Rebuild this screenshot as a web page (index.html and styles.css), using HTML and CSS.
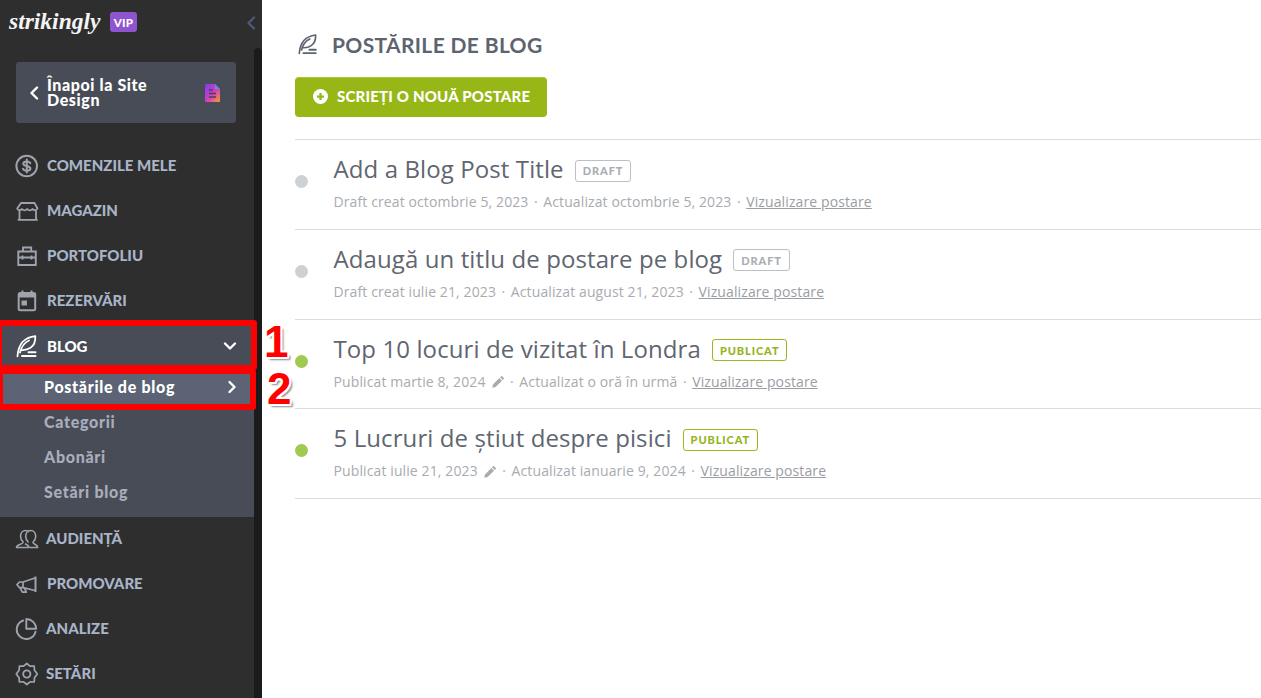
FILE: index.html
```html
<!DOCTYPE html>
<html lang="ro">
<head>
<meta charset="utf-8">
<title>Postările de blog</title>
<link rel="stylesheet" href="styles.css">
</head>
<body>
<svg class="defs" width="0" height="0" aria-hidden="true">
  <defs>
    <symbol id="i-quill" viewBox="0 0 24 24">
      <path d="M2.500 22.300C3 15 5 4 20.300 2.200 20.600 8 19 11.500 15.500 13.800 13 15.500 9.500 16.300 6.200 16M5 18.500C6.500 12.500 9.500 8.500 14 6.500" fill="none" stroke="currentColor" stroke-width="1.800" stroke-linecap="round" stroke-linejoin="round"/>
      <path d="M7 22H20.500M13.500 18.300H20.500" fill="none" stroke="currentColor" stroke-width="2" stroke-linecap="round"/>
    </symbol>
    <linearGradient id="docgrad" x1="0" y1="0" x2="1" y2="1">
      <stop offset="0" stop-color="#7a3cf0"/>
      <stop offset=".55" stop-color="#d53fc0"/>
      <stop offset="1" stop-color="#f5a21e"/>
    </linearGradient>
  </defs>
</svg>

<div class="app">
  <aside class="sidebar">
    <div class="brand">
      <span class="logo">strikingly</span>
      <span class="vip">VIP</span>
      <svg class="collapse" viewBox="0 0 10 14"><path d="M8 1.500 2.500 7 8 12.500" fill="none" stroke="currentColor" stroke-width="2.400" stroke-linecap="round" stroke-linejoin="round"/></svg>
    </div>
    <div class="side-body">
      <div class="side-inner">
        <a class="back">
          <svg class="back-arrow" viewBox="0 0 10 14"><path d="M8 1.500 2.500 7 8 12.500" fill="none" stroke="currentColor" stroke-width="2.400" stroke-linecap="round" stroke-linejoin="round"/></svg>
          <span class="back-text">Înapoi la Site Design</span>
          <svg class="back-doc" viewBox="0 0 15 18">
            <path d="M0 1a1 1 0 0 1 1-1h8.500L15 5.500V17a1 1 0 0 1-1 1H1a1 1 0 0 1-1-1z" fill="url(#docgrad)"/>
            <path d="M10 0l5 5h-5z" fill="#5f8fe0"/>
            <path d="M4 6h4M4 9.500h7M4 13h7" stroke="#4a4050" stroke-width="1.500"/>
          </svg>
        </a>
        <nav class="nav">
          <a class="nav-item">
            <svg class="nav-icon" viewBox="0 0 24 24"><circle cx="11.700" cy="12" r="10.300" fill="none" stroke="currentColor" stroke-width="2"/><path d="M15.300 9.300C15 8 13.600 7.500 11.800 7.500c-2 0-3.500.8-3.500 2.200 0 3 7.100 1.600 7.100 4.800 0 1.400-1.500 2.200-3.600 2.200-1.900 0-3.300-.6-3.700-1.900M11.800 5.500v13" fill="none" stroke="currentColor" stroke-width="2" stroke-linecap="round"/></svg>
            <span>COMENZILE MELE</span>
          </a>
          <a class="nav-item">
            <svg class="nav-icon" viewBox="0 0 24 24"><path d="M6 4h13.500l3 5.500c-1 2.200-4 2.200-5 .5-1.500 1.700-3.800 1.700-5.300 0-1.500 1.700-3.700 1.700-5.200 0-1 1.700-4 1.700-4.800-.5z" fill="none" stroke="currentColor" stroke-width="1.800" stroke-linejoin="round"/><path d="M4.500 11.500V20.800h16.500V11.500M2.700 20.800h20" fill="none" stroke="currentColor" stroke-width="1.800"/></svg>
            <span>MAGAZIN</span>
          </a>
          <a class="nav-item">
            <svg class="nav-icon" viewBox="0 0 24 24"><path d="M3.300 7.500h17.500v13.500H3.300zM8 7.500V3.500h8.200v4M3.300 13.500h17.500M7.500 11.500v4M16.500 11.500v4" fill="none" stroke="currentColor" stroke-width="1.900"/></svg>
            <span>PORTOFOLIU</span>
          </a>
          <a class="nav-item">
            <svg class="nav-icon" viewBox="0 0 24 24"><rect x="3.700" y="4" width="16.500" height="17.300" rx="1.500" fill="none" stroke="currentColor" stroke-width="2"/><path d="M3.700 6.500h16.500" stroke="currentColor" stroke-width="4"/><path d="M7.500 1.500v3.500M16.500 1.500v3.500" stroke="currentColor" stroke-width="2"/><rect x="6.500" y="11.500" width="5.500" height="5" fill="currentColor"/></svg>
            <span>REZERVĂRI</span>
          </a>
          <div class="nav-group">
            <a class="nav-item nav-item-open">
              <svg class="nav-icon"><use href="#i-quill"/></svg>
              <span>BLOG</span>
              <svg class="chev-down" viewBox="0 0 14 10"><path d="M2 2.500 7 7.500 12 2.500" fill="none" stroke="currentColor" stroke-width="2.400" stroke-linecap="round" stroke-linejoin="round"/></svg>
            </a>
            <a class="sub-item sub-item-active">
              <span>Postările de blog</span>
              <svg class="chev-right" viewBox="0 0 10 14"><path d="M2.500 2 7.500 7 2.500 12" fill="none" stroke="currentColor" stroke-width="2.400" stroke-linecap="round" stroke-linejoin="round"/></svg>
            </a>
            <a class="sub-item"><span>Categorii</span></a>
            <a class="sub-item"><span>Abonări</span></a>
            <a class="sub-item"><span>Setări blog</span></a>
          </div>
          <a class="nav-item nav-item-low">
            <svg class="nav-icon" viewBox="0 0 24 24"><path d="M8.500 15.500C6.500 13.500 5.500 11.500 5.500 9.500c0-3.500 2-6 5-6 1.500 0 2.700.6 3.500 1.600M8 15.500c-.3 2-6.500 1.500-6.500 5h12.500c0-2-2.500-3-4-3.800" fill="none" stroke="currentColor" stroke-width="1.600" stroke-linejoin="round"/><path d="M13.500 15.500c-1.800-1.800-2.800-4-2.800-6 0-3.200 2-6 5-6s5 2.800 5 6c0 2-1 4.200-2.800 6 .3 2 4.800 1.800 4.800 5h-8" fill="none" stroke="currentColor" stroke-width="1.600" stroke-linejoin="round"/></svg>
            <span>AUDIENȚĂ</span>
          </a>
          <a class="nav-item">
            <svg class="nav-icon" viewBox="0 0 24 24"><path d="M20.500 4.500v15.500" fill="none" stroke="currentColor" stroke-width="2"/><path d="M20 6 8 10H4.500L2 12.700l2.500 3H8L20 18.500M8 10v5.700M5 15.700l2.300 4.500h4l-1.800-4" fill="none" stroke="currentColor" stroke-width="1.700" stroke-linejoin="round"/></svg>
            <span>PROMOVARE</span>
          </a>
          <a class="nav-item nav-item-low">
            <svg class="nav-icon" viewBox="0 0 24 24"><path d="M8.200 3.500A9.500 9.500 0 1 0 20.500 14.700" fill="none" stroke="currentColor" stroke-width="1.900" stroke-linecap="round"/><path d="M11.300 2V11.700H21.200A9.900 9.900 0 0 0 11.300 2z" fill="none" stroke="currentColor" stroke-width="1.900" stroke-linejoin="round"/></svg>
            <span>ANALIZE</span>
          </a>
          <a class="nav-item nav-item-low">
            <svg class="nav-icon" viewBox="0 0 24 24"><path d="M11.800 1.500l3.200 2.700 4.200-.2.300 4.200 2.800 3.800-2.800 3.800-.3 4.200-4.200-.2-3.200 2.700-3.200-2.700-4.200.2-.3-4.200-2.800-3.800 2.800-3.800.3-4.200 4.200.2z" fill="none" stroke="currentColor" stroke-width="1.700" stroke-linejoin="round"/><circle cx="11.800" cy="12" r="3.600" fill="none" stroke="currentColor" stroke-width="1.900"/></svg>
            <span>SETĂRI</span>
          </a>
        </nav>
      </div>
      <div class="side-rail"></div>
    </div>
  </aside>

  <main class="main">
    <h1 class="page-title">
      <svg class="title-icon"><use href="#i-quill"/></svg>
      POSTĂRILE DE BLOG
    </h1>
    <a class="new-post">
      <svg class="plus" viewBox="0 0 16 16"><circle cx="8" cy="8" r="8" fill="#fff"/><path d="M8 4.200v7.600M4.200 8h7.600" stroke="#96b716" stroke-width="2.400"/></svg>
      <span>SCRIEȚI O NOUĂ POSTARE</span>
    </a>
    <ul class="posts">
      <li class="post">
        <span class="dot"></span>
        <div class="post-body">
          <div class="post-head"><span class="post-title">Add a Blog Post Title</span><span class="badge">DRAFT</span></div>
          <div class="post-meta">Draft creat octombrie 5, 2023<i class="sep">·</i>Actualizat octombrie 5, 2023<i class="sep">·</i><a class="view">Vizualizare postare</a></div>
        </div>
      </li>
      <li class="post">
        <span class="dot"></span>
        <div class="post-body">
          <div class="post-head"><span class="post-title">Adaugă un titlu de postare pe blog</span><span class="badge">DRAFT</span></div>
          <div class="post-meta">Draft creat iulie 21, 2023<i class="sep">·</i>Actualizat august 21, 2023<i class="sep">·</i><a class="view">Vizualizare postare</a></div>
        </div>
      </li>
      <li class="post">
        <span class="dot dot-live"></span>
        <div class="post-body">
          <div class="post-head"><span class="post-title">Top 10 locuri de vizitat în Londra</span><span class="badge badge-live">PUBLICAT</span></div>
          <div class="post-meta">Publicat martie 8, 2024<svg class="pencil" viewBox="0 0 14 14"><path d="M10.300.8l2.900 2.900-1.600 1.600-2.900-2.900zM7.900 3.200l2.900 2.900-6.900 6.900-3.600.7.700-3.600z" fill="currentColor"/></svg><i class="sep">·</i>Actualizat o oră în urmă<i class="sep">·</i><a class="view">Vizualizare postare</a></div>
        </div>
      </li>
      <li class="post">
        <span class="dot dot-live"></span>
        <div class="post-body">
          <div class="post-head"><span class="post-title">5 Lucruri de știut despre pisici</span><span class="badge badge-live">PUBLICAT</span></div>
          <div class="post-meta">Publicat iulie 21, 2023<svg class="pencil" viewBox="0 0 14 14"><path d="M10.300.8l2.900 2.900-1.600 1.600-2.900-2.900zM7.900 3.200l2.900 2.900-6.900 6.900-3.600.7.700-3.600z" fill="currentColor"/></svg><i class="sep">·</i>Actualizat ianuarie 9, 2024<i class="sep">·</i><a class="view">Vizualizare postare</a></div>
        </div>
      </li>
    </ul>
  </main>
</div>

<div class="mark mark-1"></div>
<div class="mark mark-2"></div>
<span class="num num-1">1</span>
<span class="num num-2">2</span>
</body>
</html>
```
FILE: styles.css
```css
* { box-sizing: border-box; }
html, body { margin: 0; height: 100%; overflow: hidden; background: #fff; }
body { font-family: "Lato", sans-serif; position: relative; }
a { text-decoration: none; color: inherit; }
.defs { position: absolute; }

.app { display: flex; height: 698px; }

/* sidebar */
.sidebar { width: 262px; flex: none; background: #2e2e2e; display: flex; flex-direction: column; overflow: hidden; }
.brand { height: 48px; flex: none; display: flex; align-items: center; padding-left: 9px; position: relative; }
.logo { font-family: "Liberation Serif", serif; font-style: italic; font-weight: 700; font-size: 23.500px; color: #f4f4f4; line-height: 1; width: 101px; flex: none; position: relative; top: -2px; }
.vip { width: 27px; height: 20px; background: #8f55cf; border-radius: 3px; color: #fff; font-weight: 900; font-size: 11.500px; letter-spacing: .3px; display: flex; align-items: center; justify-content: center; position: relative; top: -2px; }
.collapse { width: 10px; height: 14px; color: #4a5a78; position: absolute; left: 246px; top: 16px; }

.side-body { flex: 1; display: flex; min-height: 0; }
.side-inner { width: 254px; flex: none; padding-top: 14px; }
.side-rail { flex: 1; background: #1b1b1e; border-radius: 5px 5px 0 0; }

.back { margin-left: 16px; width: 220px; height: 61px; background: #484c57; border-radius: 3px; display: flex; align-items: center; padding: 0 16px 0 13px; color: #fff; }
.back-arrow { width: 10px; height: 14px; flex: none; }
.back-text { font-weight: 900; font-size: 16px; letter-spacing: .6px; line-height: 15px; margin: 0 0 2px 8px; width: 135px; flex: none; }
.back-doc { width: 15px; height: 18px; margin-left: auto; flex: none; }

.nav { margin-top: 20px; display: flex; flex-direction: column; }
.nav-item { height: 45px; display: flex; align-items: center; padding-left: 15px; color: #a8b4c8; font-weight: 900; font-size: 15px; }
.nav-item > span { margin: 0 0 2px 8px; }
.nav-item-low > span { margin-left: 7px; }
.nav-icon { width: 24px; height: 24px; flex: none; color: #9ea3ad; }
.nav-group { background: #484c57; padding-bottom: 7px; margin-bottom: -1px; position: relative; z-index: 1; }
.nav-item-open { color: #fff; height: 46px; }
.nav-item-open > span { margin-bottom: 0; }
.nav-item-open .nav-icon { color: #fff; }
.chev-down { width: 14px; height: 10px; margin-left: auto; margin-right: 17px; }
.sub-item { height: 35px; display: flex; align-items: center; padding-left: 44px; color: #a8aebb; font-weight: 900; font-size: 16px; letter-spacing: .7px; }
.sub-item > span { margin-bottom: 2px; }
.sub-item-active { color: #fff; background: #5b6374; height: 36px; }
.chev-right { width: 10px; height: 14px; margin-left: auto; margin-right: 17px; }

/* main */
.main { flex: 1; min-width: 0; padding: 0 0 0 33px; }
.page-title { margin: 31px 0 0; height: 26px; display: flex; align-items: center; font-weight: 700; font-size: 21px; letter-spacing: .35px; color: #5d646f; }
.title-icon { width: 22px; height: 22px; margin: 0 13px 0 2px; color: #5d646f; flex: none; }
.new-post { margin-top: 20px; width: 252px; height: 40px; background: #96b716; border-radius: 4px; border-top: 1px solid #a9c63a; color: #fff; font-weight: 900; font-size: 15px; letter-spacing: .2px; display: flex; align-items: center; padding-left: 18px; }
.new-post > span { margin-bottom: 3px; }
.plus { width: 15px; height: 15px; margin: 0 9px 2px 0; flex: none; }

.posts { list-style: none; margin: 22.400px 0 0; padding: 0; border-top: 1px solid #dcdcdc; }
.post { height: 89.600px; border-bottom: 1px solid #dcdcdc; display: flex; }
.dot { width: 13px; height: 13px; border-radius: 50%; background: #cdd1d4; margin: 35px 0 0; flex: none; }
.dot-live { background: #a0c94f; }
.post-body { margin-left: 25.500px; padding-top: 12px; font-family: "Open Sans", sans-serif; }
.post-head { display: flex; align-items: center; height: 33px; }
.post-title { font-size: 24px; letter-spacing: .1px; color: #5f6670; line-height: 33px; text-rendering: optimizeLegibility; font-kerning: normal; }
.badge { margin: 4px 0 0 11px; height: 22px; border: 1px solid #bcbfc4; border-radius: 3px; padding: 0 7px; font-family: "Lato", sans-serif; font-weight: 900; font-size: 11px; letter-spacing: .9px; color: #a9adb3; display: flex; align-items: center; }
.badge-live { border-color: #97bb1f; color: #93b51a; }
.post-meta { margin-top: 8px; font-size: 14px; letter-spacing: .11px; line-height: 18px; color: #a8abb0; display: flex; align-items: center; }
.sep { font-style: normal; margin: 0 5.500px; }
.view { text-decoration: underline; color: #9a9da3; }
.pencil { width: 13px; height: 13px; margin-left: 6px; color: #a8abb0; flex: none; }

/* annotation overlays */
.mark { position: absolute; z-index: 2; border-style: solid; border-color: #f00; border-radius: 3px; }
.mark-1 { left: -4px; top: 320px; width: 261px; height: 50px; border-width: 6px 6px 5px; }
.mark-2 { left: -3px; top: 369px; width: 259px; height: 41px; border-width: 5px 6px 6px; }
.num { position: absolute; z-index: 2; font-family: "Liberation Sans", sans-serif; font-weight: 700; font-size: 44px; line-height: 1; color: #f00; text-shadow: -1.500px -1.500px 0 #fff, 1.500px -1.500px 0 #fff, -1.500px 1.500px 0 #fff, 1.500px 1.500px 0 #fff, 0 -2px 0 #fff, 0 2px 0 #fff, -2px 0 0 #fff, 2px 0 0 #fff, 3px 3px 2px #888; }
.num-1 { left: 264px; top: 320px; }
.num-2 { left: 267px; top: 367px; }
```
